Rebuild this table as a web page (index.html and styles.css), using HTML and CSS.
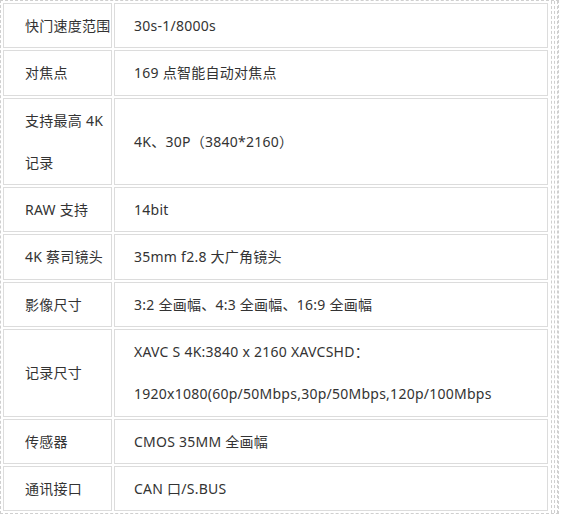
FILE: index.html
```html
<!DOCTYPE html>
<html>
<head>
    <meta charset="utf-8">
    <title>参数</title>
    <link rel="stylesheet" href="styles.css">
</head>
<body>
    <div class="frame">
        <div class="edge">
            <div class="edge">
                <div class="edge">
                    <table class="spec">
                        <colgroup>
                            <col class="col-name">
                            <col>
                        </colgroup>
                        <tr><td>快门速度范围</td><td>30s-1/8000s</td></tr>
                        <tr><td>对焦点</td><td>169 点智能自动对焦点</td></tr>
                        <tr><td>支持最高 4K 记录</td><td>4K、30P（3840*2160）</td></tr>
                        <tr><td>RAW 支持</td><td>14bit</td></tr>
                        <tr><td>4K 蔡司镜头</td><td>35mm f2.8 大广角镜头</td></tr>
                        <tr><td>影像尺寸</td><td>3:2 全画幅、4:3 全画幅、16:9 全画幅</td></tr>
                        <tr><td>记录尺寸</td><td>XAVC S 4K:3840 x 2160 XAVCSHD：<br>1920x1080(60p/50Mbps,30p/50Mbps,120p/100Mbps</td></tr>
                        <tr><td>传感器</td><td>CMOS 35MM 全画幅</td></tr>
                        <tr><td>通讯接口</td><td>CAN 口/S.BUS</td></tr>
                    </table>
                </div>
            </div>
        </div>
    </div>
</body>
</html>
```

FILE: styles.css
```css
body {
    margin: 0;
    font-family: "Noto Sans", "Noto Sans CJK SC", sans-serif;
    font-size: 14px;
    color: #333333;
    background: #ffffff;
}

/* dashed outline around the spec table */
.frame {
    border: 1px dashed #cfcfcf;
    width: 559px;
    box-sizing: border-box;
}

.edge {
    border-right: 1px dashed #cfcfcf;
    padding-right: 2px;
}

.spec {
    width: 549px;
    table-layout: fixed;
    border-collapse: separate;
    border-spacing: 2px;
}

.col-name {
    width: 109px;
}

.spec td {
    border: 1px solid #dcdcdc;
    line-height: 42.3px;
    letter-spacing: 0.25px;
    padding: 1px 19px 0 19px;
    vertical-align: middle;
}

.spec td:first-child {
    padding-left: 21px;
    padding-right: 0;
}
```
